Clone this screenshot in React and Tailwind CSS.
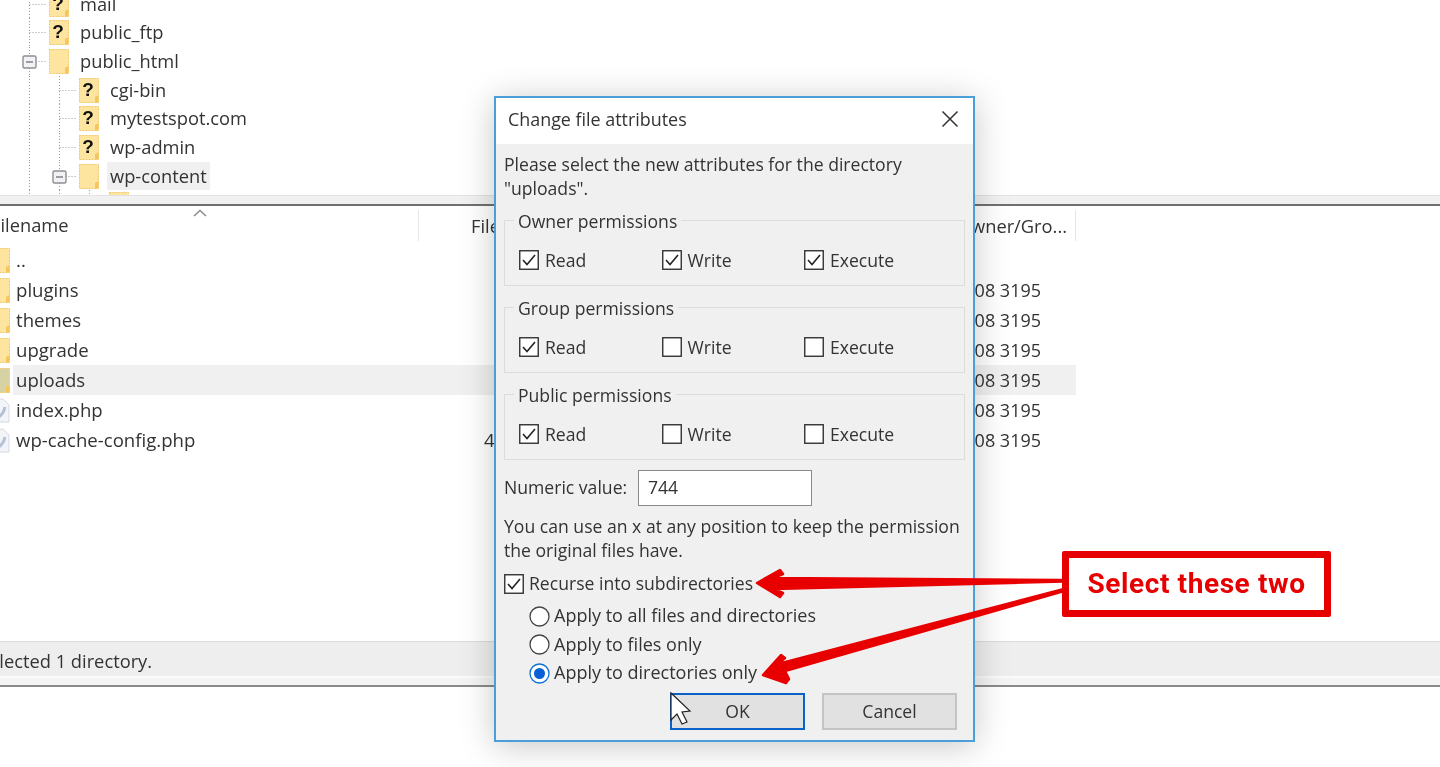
const treeRows = [
  { name: 'mail', depth: 1, unknown: true },
  { name: 'public_ftp', depth: 1, unknown: true },
  { name: 'public_html', depth: 1, expander: true },
  { name: 'cgi-bin', depth: 2, unknown: true },
  { name: 'mytestspot.com', depth: 2, unknown: true },
  { name: 'wp-admin', depth: 2, unknown: true },
  { name: 'wp-content', depth: 2, expander: true, active: true },
  { name: '', depth: 3 },
];

const fileRows = [
  { name: '..', type: 'folder' },
  { name: 'plugins', type: 'folder', owner: true },
  { name: 'themes', type: 'folder', owner: true },
  { name: 'upgrade', type: 'folder', owner: true },
  { name: 'uploads', type: 'folder', owner: true, selected: true },
  { name: 'index.php', type: 'file', owner: true },
  { name: 'wp-cache-config.php', type: 'file', owner: true, size: '4' },
];

const groups = [
  { label: 'Owner permissions', values: [true, true, true] },
  { label: 'Group permissions', values: [true, false, false] },
  { label: 'Public permissions', values: [true, false, false] },
];

function Folder({ unknown, tint = '#fde49f' }) {
  return (
    <svg width="20" height="25" viewBox="0 0 20 25" className="shrink-0">
      <rect x="0.5" y="0.5" width="19" height="24" fill={tint} stroke="#f3c766" strokeDasharray="2 1" />
      <path d="M16 24.5 V19 L19.5 17 V24.5 Z" fill="#f5c65c" />
      {unknown && (
        <text x="9" y="18" textAnchor="middle" fontSize="19" fontWeight="700" fontFamily="'Liberation Sans', sans-serif" fill="#111">?</text>
      )}
    </svg>
  );
}

function FileIcon() {
  return (
    <svg width="20" height="25" viewBox="0 0 20 25" className="shrink-0">
      <path d="M1 1 H13 L19 7 V24 H1 Z" fill="#f2f4f8" stroke="#d5d9e0" />
      <path d="M7 20 C11 18 14 14 15 9" fill="none" stroke="#b3c2d6" strokeWidth="3" />
    </svg>
  );
}

function Connector({ expander, width = 35 }) {
  return (
    <svg width={width} height="29" viewBox={`0 0 ${width} 29`} className="shrink-0">
      <line x1="15.5" y1="0" x2="15.5" y2="29" stroke="#9a9a9a" strokeDasharray="1 2" />
      <line x1="15.5" y1="14.5" x2={width - 2} y2="14.5" stroke="#9a9a9a" strokeDasharray="1 2" />
      {expander && (
        <g>
          <rect x="9" y="9" width="13" height="12" rx="1.5" fill="#f2f2f4" stroke="#8d8d94" strokeWidth="1.4" />
          <line x1="12" y1="15" x2="19" y2="15" stroke="#77777f" strokeWidth="1.4" />
        </g>
      )}
    </svg>
  );
}

function Guide() {
  return (
    <svg width="30" height="29" viewBox="0 0 30 29" className="shrink-0">
      <line x1="15.5" y1="0" x2="15.5" y2="29" stroke="#9a9a9a" strokeDasharray="1 2" />
    </svg>
  );
}

function TreeRow({ row }) {
  return (
    <div className="flex h-[28.67px] items-center pl-[14px]">
      {Array.from({ length: row.depth - 1 }).map((_, i) => (
        <Guide key={i} />
      ))}
      <Connector expander={row.expander} />
      <Folder unknown={row.unknown} />
      {row.name && (
        <span className={`ml-[8px] flex h-[28px] items-center whitespace-nowrap px-[3px] pb-[1px] ${row.active ? 'bg-[#f0f0f0]' : ''}`}>{row.name}</span>
      )}
    </div>
  );
}

function FileRow({ row }) {
  return (
    <div className="flex h-[30px] w-[1076px] items-center text-[18.6px]">
      <div className="-ml-[10px] shrink-0">
        {row.type === 'folder' ? <Folder tint={row.selected ? '#d6d2a4' : '#fde49f'} /> : <FileIcon />}
      </div>
      <div className={`ml-[3px] flex h-full flex-1 items-center pl-[3px] ${row.selected ? 'bg-[#f0f0f0]' : ''}`}>
        <span className="w-[468px] whitespace-nowrap">{row.name}</span>
        <span className="w-[470px]">{row.size}</span>
        {row.owner && <span className="w-[82px] whitespace-nowrap pr-[2px] text-right text-[18px]">1208 3195</span>}
      </div>
    </div>
  );
}

function Checkbox({ checked }) {
  return (
    <svg width="20" height="20" viewBox="0 0 20 20" className="shrink-0">
      <rect x="0.75" y="0.75" width="18.5" height="18.5" fill="#fff" stroke="#333" strokeWidth="1.4" />
      {checked && <path d="M4 10 L8 14.5 L16 5" fill="none" stroke="#222" strokeWidth="1.6" />}
    </svg>
  );
}

function Radio({ checked }) {
  return (
    <svg width="21" height="21" viewBox="0 0 21 21" className="shrink-0">
      <circle cx="10.5" cy="10.5" r="9.5" fill="#fff" stroke={checked ? '#0a6fd8' : '#444'} strokeWidth="1.3" />
      {checked && <circle cx="10.5" cy="10.5" r="5.5" fill="#0a5fd6" />}
    </svg>
  );
}

function PermissionGroup({ group }) {
  return (
    <div className="relative flex h-[66px] items-center border border-[#dcdcdc] pl-[14px] pt-[14px]">
      <span className="absolute -top-[12px] left-[9px] bg-[#f0f0f0] px-[4px] leading-[24px]">{group.label}</span>
      {['Read', 'Write', 'Execute'].map((label, i) => (
        <div key={label} className="flex w-[142.5px] items-center gap-[6px]">
          <Checkbox checked={group.values[i]} />
          <span>{label}</span>
        </div>
      ))}
    </div>
  );
}

function Dialog() {
  return (
    <div className="absolute left-[494px] top-[96px] flex h-[646px] w-[481px] flex-col border-2 border-[#4b9fd8] bg-[#f0f0f0] text-[17.6px] shadow-[0_4px_32px_rgba(0,0,0,0.22)]">
      <div className="flex h-[46px] shrink-0 items-center justify-between bg-white pb-[4px] pl-[12px] pr-[14px]">
        <span className="text-[17.9px]">Change file attributes</span>
        <svg width="18" height="18" viewBox="0 0 18 18">
          <path d="M1.5 1.5 L16.5 16.5 M16.5 1.5 L1.5 16.5" stroke="#333" strokeWidth="1.5" />
        </svg>
      </div>
      <div className="flex flex-1 flex-col px-[8px] pt-[8px]">
        <p>
          Please select the new attributes for the directory
          <br />
          "uploads".
        </p>
        <div className="mt-[20px] flex flex-col gap-[21px]">
          {groups.map((g) => (
            <PermissionGroup key={g.label} group={g} />
          ))}
        </div>
        <div className="mt-[10px] flex items-center">
          <span className="w-[134px] pb-[2px]">Numeric value:</span>
          <div className="flex h-[36px] w-[174px] items-center border border-[#8a8a8a] bg-white pb-[2px] pl-[9px]">744</div>
        </div>
        <p className="mt-[8px]">
          You can use an x at any position to keep the permission
          <br />
          the original files have.
        </p>
        <div className="mt-[10px] flex h-[24px] items-center gap-[5px]">
          <Checkbox checked />
          <span className="pb-[2px]">Recurse into subdirectories</span>
        </div>
        <div className="mt-[8px] flex flex-col gap-[4.67px] pl-[25px]">
          {['Apply to all files and directories', 'Apply to files only', 'Apply to directories only'].map((label, i) => (
            <div key={label} className="flex h-[24px] items-center gap-[4px]">
              <Radio checked={i === 2} />
              <span className="pb-[2px] text-[18px]">{label}</span>
            </div>
          ))}
        </div>
        <div className="mt-[8px] flex justify-end gap-[17px] pr-[8px]">
          <div className="flex h-[37px] w-[135px] items-center justify-center border-[2.5px] border-[#0a62c9] bg-[#e1e1e1] pb-[2px]">OK</div>
          <div className="flex h-[37px] w-[135px] items-center justify-center border-2 border-[#c4c4c4] bg-[#e1e1e1] pb-[2px]">Cancel</div>
        </div>
      </div>
    </div>
  );
}

export default function App() {
  return (
    <div className="relative h-[767px] w-[1440px] overflow-hidden bg-white font-['Open_Sans',sans-serif] text-[18.3px] leading-[24px] text-[#333] blur-[0.35px]">
      <div className="h-[195px] overflow-hidden">
        <div className="-mt-[10px]">
          {treeRows.map((row, i) => (
            <TreeRow key={i} row={row} />
          ))}
        </div>
      </div>

      <div className="h-[11px] border-b-2 border-t border-b-[#707070] border-t-[#e2e2e2] bg-[#f1f1f1]" />

      <div className="flex h-[39px] w-[1076px] items-center">
        <div className="relative flex h-[31px] w-[419px] shrink-0 items-center border-r border-r-[#e6e6e6] pb-[2px]">
          <span className="-ml-[9px]">Filename</span>
          <svg width="14" height="8" viewBox="0 0 14 8" className="absolute -top-[1px] left-[193px]">
            <path d="M1 7 L7 1.5 L13 7" fill="none" stroke="#8a8a8a" strokeWidth="1.5" />
          </svg>
        </div>
        <span className="ml-[52px] w-[470px] shrink-0">Filesize</span>
        <div className="flex h-[31px] flex-1 items-center justify-end whitespace-nowrap border-r border-r-[#e6e6e6] pr-[8px]">Owner/Gro...</div>
      </div>

      <div className="h-[396px]">
        {fileRows.map((row) => (
          <FileRow key={row.name} row={row} />
        ))}
      </div>

      <div className="flex h-[46px] flex-col border-b-2 border-t border-b-[#8a8a8a] border-t-[#dcdcdc] bg-[#f4f4f4]">
        <div className="h-[36px] border-b-2 border-b-[#fafafa] bg-[#eeeeee] pt-[7px]">
          <span className="-ml-[21px] block whitespace-nowrap">Selected 1 directory.</span>
        </div>
      </div>

      <Dialog />

      <svg width="1440" height="767" viewBox="0 0 1440 767" className="pointer-events-none absolute left-0 top-0">
        <path d="M1064 580 L773 578 L783 574 L780 570 L757 583 L780 597 L783 593 L773 589 L1064 581.5 Z" fill="#e80000" stroke="#e80000" strokeWidth="2.5" strokeLinejoin="round" />
        <path d="M1064 589 L778 664 L785 658 L781 655 L763 675 L786 683 L789 679 L785 671 L1064 591 Z" fill="#e80000" stroke="#e80000" strokeWidth="2.5" strokeLinejoin="round" />
        <path d="M671 693 V720 L677 714 L682 724 L687 722 L682 712 L690 711 Z" fill="#fff" stroke="#222" strokeWidth="1.2" />
      </svg>

      <div className="absolute left-[1062px] top-[551px] flex h-[66px] w-[269px] items-center justify-center rounded-[2px] border-[7px] border-[#e60000] bg-white">
        <span className="whitespace-nowrap font-['Roboto',sans-serif] text-[28px] font-bold tracking-[0.6px] text-[#e60000]">Select these two</span>
      </div>
    </div>
  );
}
